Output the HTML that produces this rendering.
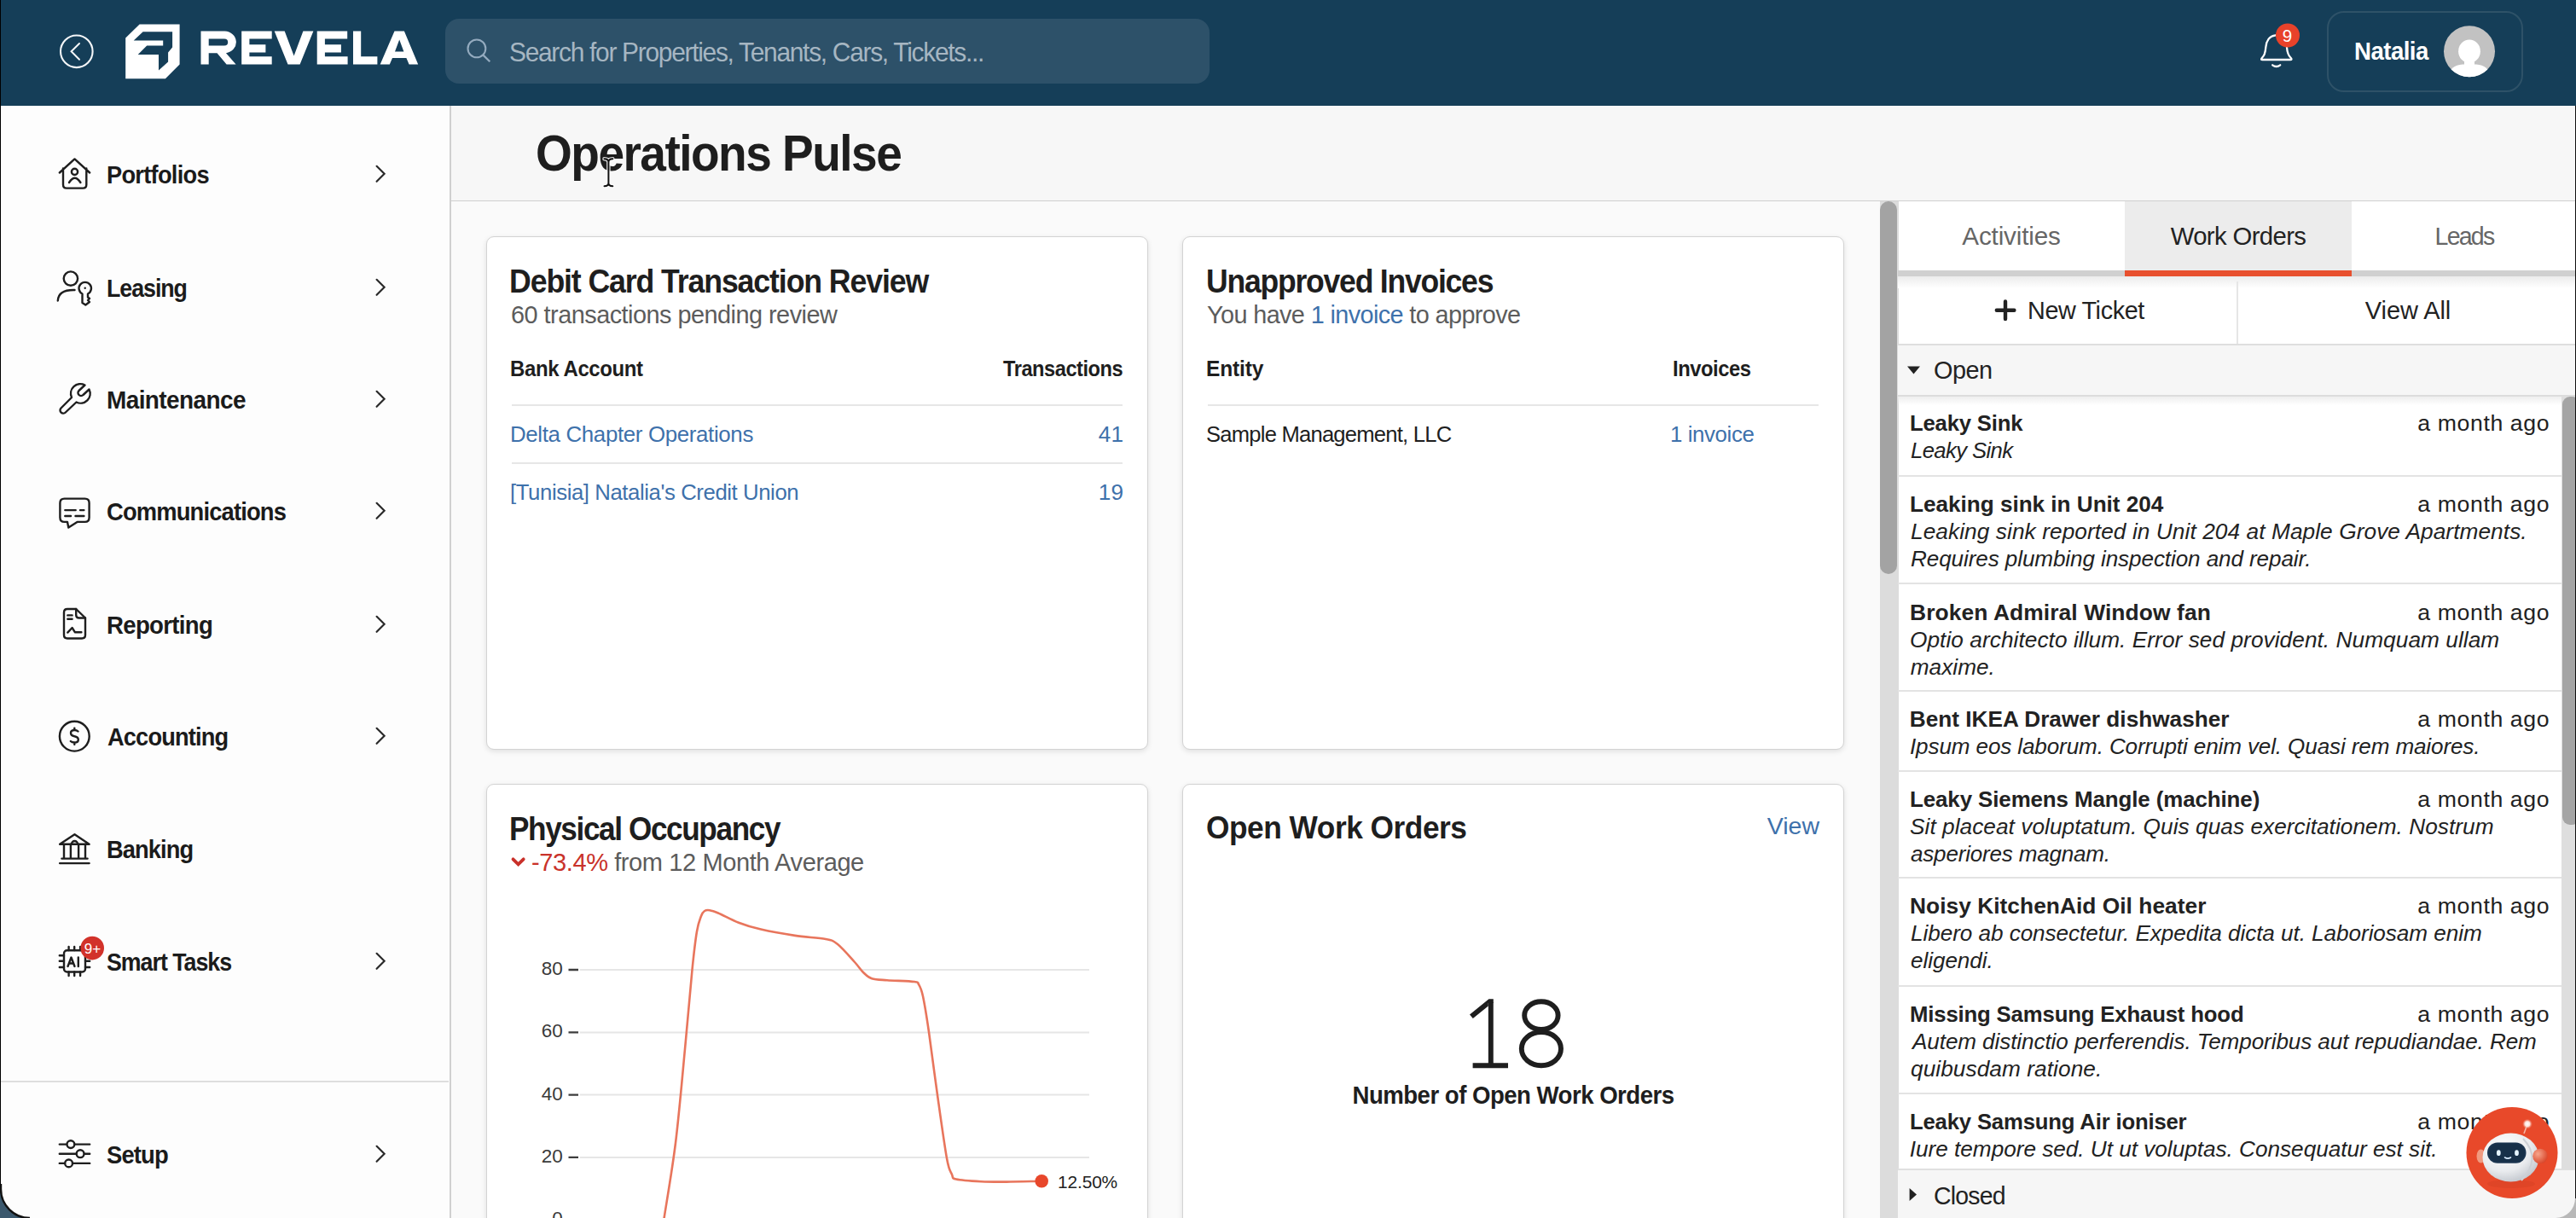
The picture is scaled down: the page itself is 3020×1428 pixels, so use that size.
<!DOCTYPE html>
<html><head><meta charset="utf-8"><title>Operations Pulse</title>
<style>
html,body{margin:0;padding:0;}
body{width:3020px;height:1428px;overflow:hidden;position:relative;background:#fff;font-family:"Liberation Sans",sans-serif;}
.a{position:absolute;}
.t{position:absolute;white-space:nowrap;line-height:1;}
svg.a{overflow:visible;}
</style></head><body>
<div class="a" style="left:528px;top:124px;width:2492px;height:111px;background:#f7f7f7;"></div>
<div class="a" style="left:528px;top:235px;width:2492px;height:1193px;background:#fafafa;"></div>
<div class="a" style="left:1px;top:124px;width:527px;height:1304px;background:#fdfdfd;"></div>
<div class="a" style="left:527px;top:124px;width:1.7px;height:1304px;background:#d0d0d0;"></div>
<div class="a" style="left:1px;top:1267px;width:525px;height:2px;background:#dedede;"></div>
<div class="a" style="left:0px;top:0px;width:3020px;height:124px;background:#153e58;"></div>
<div class="a" style="left:0px;top:0px;width:1px;height:1428px;background:#000;"></div>
<div class="a" style="left:528px;top:234.5px;width:2492px;height:1.8px;background:#cfcfcf;"></div>
<svg class="a" style="left:0;top:0" width="600" height="124" viewBox="0 0 600 124">
<circle cx="89.8" cy="60.3" r="18.8" fill="none" stroke="#f4f6f8" stroke-width="2.1"/>
<path d="M93 51 L83.6 60.3 L93 69.7" fill="none" stroke="#f4f6f8" stroke-width="2" stroke-linecap="round" stroke-linejoin="miter"/>
<path fill="#fff" fill-rule="evenodd" d="M163.6 28.5 L210.6 28.5 L210.6 75.5 L193.9 92.25 L147.2 92.25 L147.2 44.6 Z
 M167.6 37.2 L202.1 37.2 L202.1 55.5 L197.1 61.4 L197.1 72.5 L186 82.4 L186 64.1 L161.7 64.1 L172.2 53.5 L191.2 53.5 L191.2 47.6 L156.7 47.6 Z"/>
<g fill="#fff" fill-rule="evenodd">
<path d="M235.5 36.4 H263.5 A14.2 13 0 0 1 265 62.2 L276.6 75.5 H265.6 L254.5 62.2 H244.7 V75.5 H235.5 Z M244.7 45.4 V53.4 H263 A4.2 4 0 0 0 263 45.4 Z"/>
<path d="M283.2 36.4 H318.7 V45.5 H292.4 V52.2 H311.4 V61.4 H292.4 V66.3 H318.7 V75.5 H283.2 Z"/>
<path d="M321.7 36.4 H333.7 L344.6 65.5 L355.4 36.4 H367.4 L351.6 75.5 H337.5 Z"/>
<path d="M371.7 36.4 H407.2 V45.5 H380.9 V52.2 H399.9 V61.4 H380.9 V66.3 H407.6 V75.5 H371.7 Z"/>
<path d="M414 36.4 H423.2 V66.3 H442.4 V75.5 H414 Z"/>
<path d="M462.5 36.4 H473.9 L490.2 75.5 H479.6 L476.4 67.9 H460 L456.8 75.5 H445.7 Z M468.2 46.5 L473.4 60.5 H463 Z"/>
</g>
</svg>
<div class="a" style="left:522px;top:22px;width:896px;height:76px;background:#2d5169;border-radius:16px;"></div>
<svg class="a" style="left:540px;top:40px" width="40" height="40" viewBox="540 40 40 40">
<circle cx="558.9" cy="56.9" r="10.4" fill="none" stroke="#94abbf" stroke-width="2.1"/>
<path d="M566.5 64.6 L574.3 72.3" stroke="#94abbf" stroke-width="2.3" stroke-linecap="butt"/>
</svg>
<div class="t" style="transform:scaleX(0.9562);transform-origin:0 0;top:45.5px;font-size:31.3px;font-weight:400;color:#a6b6c2;letter-spacing:-1.355px;left:597.09px;">Search for Properties, Tenants, Cars, Tickets...</div>
<svg class="a" style="left:2640px;top:20px" width="70" height="70" viewBox="2640 20 70 70">
<path d="M2667.8 41.3 C2660.5 42 2656.8 48 2656.3 55.5 C2655.8 62.5 2654.5 65.5 2651.8 68 Q2650 70 2652.5 70 H2685 Q2687.6 70 2685.8 68 C2683 65.5 2681.5 62.5 2681 55.5" fill="none" stroke="#fff" stroke-width="2.3" stroke-linejoin="round" stroke-linecap="round"/>
<path d="M2664.2 76.3 Q2668.7 79.8 2673.2 76.3" fill="none" stroke="#fff" stroke-width="2.3" stroke-linecap="round"/>
<circle cx="2682" cy="41.5" r="14" fill="#e8422a"/>
</svg>
<div class="t" style="top:31.9px;font-size:20.5px;font-weight:400;color:#fff;left:1681.50px;width:2000px;text-align:center;">9</div>
<div class="a" style="left:2728px;top:13px;width:230px;height:95px;border:2px solid #2e5268;border-radius:20px;box-sizing:border-box;"></div>
<div class="t" style="transform:scaleX(0.9480);transform-origin:0 0;top:46.4px;font-size:29.1px;font-weight:700;color:#fff;letter-spacing:-0.548px;left:2760.10px;">Natalia</div>
<svg class="a" style="left:2860px;top:25px" width="70" height="70" viewBox="2860 25 70 70">
<defs><clipPath id="av"><circle cx="2895" cy="60.3" r="30"/></clipPath></defs>
<circle cx="2895" cy="60.3" r="30" fill="#c2c2c2"/>
<g clip-path="url(#av)" fill="#fff">
<ellipse cx="2895" cy="60.2" rx="12.9" ry="13.6"/>
<rect x="2889" y="68" width="12" height="10"/>
<path d="M2871 100 V89 Q2872 76.8 2887 75.5 H2903 Q2918 76.8 2919 89 V100 Z"/>
</g>
</svg>
<div class="t" style="transform:scaleX(0.9229);transform-origin:0 0;top:190.2px;font-size:29.5px;font-weight:700;color:#1b1b1b;letter-spacing:-0.781px;left:125.12px;">Portfolios</div>
<svg class="a" style="left:430px;top:189px" width="30" height="30" viewBox="0 0 30 30"><path d="M11.6 5.8 L20.6 14.8 L11.6 23.8" fill="none" stroke="#2a2a2a" stroke-width="2.2" stroke-linecap="round" stroke-linejoin="miter"/></svg>
<div class="t" style="transform:scaleX(0.9071);transform-origin:0 0;top:322.7px;font-size:29.5px;font-weight:700;color:#1b1b1b;letter-spacing:-1.133px;left:125.14px;">Leasing</div>
<svg class="a" style="left:430px;top:321.5px" width="30" height="30" viewBox="0 0 30 30"><path d="M11.6 5.8 L20.6 14.8 L11.6 23.8" fill="none" stroke="#2a2a2a" stroke-width="2.2" stroke-linecap="round" stroke-linejoin="miter"/></svg>
<div class="t" style="transform:scaleX(0.9480);transform-origin:0 0;top:454.2px;font-size:29.5px;font-weight:700;color:#1b1b1b;letter-spacing:-0.616px;left:125.08px;">Maintenance</div>
<svg class="a" style="left:430px;top:453px" width="30" height="30" viewBox="0 0 30 30"><path d="M11.6 5.8 L20.6 14.8 L11.6 23.8" fill="none" stroke="#2a2a2a" stroke-width="2.2" stroke-linecap="round" stroke-linejoin="miter"/></svg>
<div class="t" style="transform:scaleX(0.9268);transform-origin:0 0;top:585.2px;font-size:29.5px;font-weight:700;color:#1b1b1b;letter-spacing:-0.901px;left:125.11px;">Communications</div>
<svg class="a" style="left:430px;top:584px" width="30" height="30" viewBox="0 0 30 30"><path d="M11.6 5.8 L20.6 14.8 L11.6 23.8" fill="none" stroke="#2a2a2a" stroke-width="2.2" stroke-linecap="round" stroke-linejoin="miter"/></svg>
<div class="t" style="transform:scaleX(0.9360);transform-origin:0 0;top:717.8px;font-size:29.5px;font-weight:700;color:#1b1b1b;letter-spacing:-0.734px;left:125.10px;">Reporting</div>
<svg class="a" style="left:430px;top:716.6px" width="30" height="30" viewBox="0 0 30 30"><path d="M11.6 5.8 L20.6 14.8 L11.6 23.8" fill="none" stroke="#2a2a2a" stroke-width="2.2" stroke-linecap="round" stroke-linejoin="miter"/></svg>
<div class="t" style="transform:scaleX(0.9230);transform-origin:0 0;top:849.2px;font-size:29.5px;font-weight:700;color:#1b1b1b;letter-spacing:-0.925px;left:126.04px;">Accounting</div>
<svg class="a" style="left:430px;top:848px" width="30" height="30" viewBox="0 0 30 30"><path d="M11.6 5.8 L20.6 14.8 L11.6 23.8" fill="none" stroke="#2a2a2a" stroke-width="2.2" stroke-linecap="round" stroke-linejoin="miter"/></svg>
<div class="t" style="transform:scaleX(0.9237);transform-origin:0 0;top:981.2px;font-size:29.5px;font-weight:700;color:#1b1b1b;letter-spacing:-0.971px;left:125.11px;">Banking</div>
<div class="t" style="transform:scaleX(0.9058);transform-origin:0 0;top:1113.2px;font-size:29.5px;font-weight:700;color:#1b1b1b;letter-spacing:-1.092px;left:125.14px;">Smart Tasks</div>
<svg class="a" style="left:430px;top:1112px" width="30" height="30" viewBox="0 0 30 30"><path d="M11.6 5.8 L20.6 14.8 L11.6 23.8" fill="none" stroke="#2a2a2a" stroke-width="2.2" stroke-linecap="round" stroke-linejoin="miter"/></svg>
<div class="t" style="transform:scaleX(0.9300);transform-origin:0 0;top:1339.2px;font-size:29.5px;font-weight:700;color:#1b1b1b;letter-spacing:-0.933px;left:125.11px;">Setup</div>
<svg class="a" style="left:430px;top:1338px" width="30" height="30" viewBox="0 0 30 30"><path d="M11.6 5.8 L20.6 14.8 L11.6 23.8" fill="none" stroke="#2a2a2a" stroke-width="2.2" stroke-linecap="round" stroke-linejoin="miter"/></svg>
<svg class="a" style="left:0;top:0" width="140" height="1428" viewBox="0 0 140 1428">
<g fill="none" stroke="#1e1e1e" stroke-width="2.4" stroke-linecap="round" stroke-linejoin="round">
<!-- portfolios -->
<path d="M69.8 202.5 L87.5 186.4 L105.2 202.5 M74 197.5 V216.5 Q74 220.6 78 220.6 H97.3 Q101.3 220.6 101.3 216.5 V197.5"/>
<circle cx="87.5" cy="201.4" r="3.6"/>
<path d="M81 214 Q87.7 203.5 94.4 214"/>
<!-- leasing -->
<circle cx="82.9" cy="326.6" r="8.2"/>
<path d="M67.8 352.5 Q68.5 339.5 87.5 340"/>
<path d="M96.5 344.5 A7.2 7.2 0 1 1 103 344.5 V348.5 L105 350 L103 352 L105 354 L100.3 357.5 L96.5 355 Z"/>
<!-- maintenance -->
<path d="M84 466 L71.5 478.5 A3.6 3.6 0 0 0 76.8 483.5 L89.5 471.5 A11.2 11.2 0 0 0 104.5 456.5 L97.5 463 A3.5 3.5 0 0 1 92.5 458 L99.5 451.5 A11.2 11.2 0 0 0 84 466 Z"/>
<!-- communications -->
<path d="M75.5 584.6 H99.5 Q104.6 584.6 104.6 589.7 V606.8 Q104.6 611.9 99.5 611.9 H90.5 L80.3 618.5 L79 611.9 H75.5 Q70.4 611.9 70.4 606.8 V589.7 Q70.4 584.6 75.5 584.6 Z"/>
<path d="M76.3 598.1 H88.7 M94 598.1 H98.4 M76.3 605 H83 M88.5 605 H98.4"/>
<!-- reporting -->
<path d="M89.2 714 H79 Q75 714 75 718 V744.5 Q75 748.5 79 748.5 H96 Q100 748.5 100 744.5 V724.5 Z"/>
<path d="M89.2 714 V720.9 Q89.2 724.5 92.8 724.5 H100"/>
<path d="M79.3 721.4 H84.6 M79.3 725.8 H84.6"/>
<path d="M79.3 741.6 L84.6 736 L87.8 741.2 H95.4"/>
<!-- accounting -->
<circle cx="87.3" cy="863.2" r="17.4"/>
<path d="M91.5 857.5 Q90 856 87.3 856 Q83 856 83 859.3 Q83 862.5 87.3 863.2 Q91.8 864 91.8 867.2 Q91.8 870.5 87.3 870.5 Q84.3 870.5 82.8 869 M87.3 853.6 V856 M87.3 870.5 V872.8"/>
<!-- banking -->
<path d="M70.1 989.8 L87.5 978.3 L104.6 989.8 Z"/>
<path d="M75 990 V1006.6 M82.9 990 V1006.6 M92.1 990 V1006.6 M100 990 V1006.6 M72.4 1006.6 H102.6 M70.1 1012.1 H104.6"/>
<path d="M84 989.5 A3.5 3.5 0 0 1 91 989.5"/>
<!-- smart tasks -->
<rect x="75" y="1114.3" width="25" height="25.2" rx="3.5"/>
<path d="M80.6 1110 V1114 M87.2 1110 V1114 M94.1 1110 V1114 M80.6 1139.5 V1144.1 M87.2 1139.5 V1144.1 M94.1 1139.5 V1144.1 M69.8 1120.2 H75 M69.8 1126.7 H75 M69.8 1134 H75 M100 1120.2 H105.2 M100 1126.7 H105.2 M100 1134 H105.2"/>
<path d="M79.5 1133 L83.5 1122.5 L87.5 1133 M81 1129.5 H86 M91.8 1122.5 V1133"/>
<!-- setup -->
<path d="M69.8 1341.6 H105.2 M69.8 1352.7 H105.2 M69.8 1363.9 H105.2"/>
</g>
<g fill="#fdfdfd" stroke="#1e1e1e" stroke-width="2.4">
<circle cx="82.9" cy="1341.6" r="4.4"/>
<circle cx="94.1" cy="1352.7" r="4.4"/>
<circle cx="80.6" cy="1363.9" r="4.4"/>
</g>
<circle cx="99.7" cy="337.8" r="1.2" fill="#1e1e1e"/>
<circle cx="108.2" cy="1111.6" r="13.8" fill="#d2322a"/>
</svg>
<div class="t" style="top:1104.1px;font-size:17px;font-weight:400;color:#fff;left:-891.60px;width:2000px;text-align:center;">9+</div>
<div class="t" style="transform:scaleX(0.9240);transform-origin:0 0;top:149.5px;font-size:59.6px;font-weight:700;color:#1e1e1e;letter-spacing:-1.664px;left:628.15px;">Operations Pulse</div>
<div class="a" style="left:570px;top:277px;width:776px;height:601.5px;background:#fff;border:1.6px solid #d3d3d3;border-radius:9px;box-sizing:border-box;box-shadow:0 2px 6px rgba(0,0,0,0.11);"></div>
<div class="a" style="left:1386px;top:277px;width:776px;height:601.5px;background:#fff;border:1.6px solid #d3d3d3;border-radius:9px;box-sizing:border-box;box-shadow:0 2px 6px rgba(0,0,0,0.11);"></div>
<div class="a" style="left:570px;top:919px;width:776px;height:560px;background:#fff;border:1.6px solid #d3d3d3;border-radius:9px;box-sizing:border-box;box-shadow:0 2px 6px rgba(0,0,0,0.11);"></div>
<div class="a" style="left:1386px;top:919px;width:776px;height:560px;background:#fff;border:1.6px solid #d3d3d3;border-radius:9px;box-sizing:border-box;box-shadow:0 2px 6px rgba(0,0,0,0.11);"></div>
<div class="t" style="transform:scaleX(0.9108);transform-origin:0 0;top:310.4px;font-size:39.2px;font-weight:700;color:#1e1e1e;letter-spacing:-1.234px;left:597.27px;">Debit Card Transaction Review</div>
<div class="t" style="transform:scaleX(0.9831);transform-origin:0 0;top:353.8px;font-size:29.4px;font-weight:400;color:#5c5c5c;letter-spacing:-0.543px;left:599.02px;">60 transactions pending review</div>
<div class="t" style="transform:scaleX(0.9594);transform-origin:0 0;top:419.6px;font-size:25.0px;font-weight:700;color:#1e1e1e;letter-spacing:-0.408px;left:598.08px;">Bank Account</div>
<div class="t" style="transform:scaleX(0.9461);transform-origin:100% 0;top:419.6px;font-size:25.0px;font-weight:700;color:#1e1e1e;letter-spacing:-0.505px;right:1703.53px;">Transactions</div>
<div class="a" style="left:600px;top:474px;width:716px;height:2px;background:#e6e6e6;"></div>
<div class="t" style="transform:scaleX(0.9880);transform-origin:0 0;top:496.2px;font-size:26.2px;font-weight:400;color:#3e71ab;letter-spacing:-0.355px;left:598.02px;">Delta Chapter Operations</div>
<div class="t" style="top:496.2px;font-size:26.2px;font-weight:400;color:#3e71ab;right:1703.00px;">41</div>
<div class="a" style="left:600px;top:542px;width:716px;height:2px;background:#e6e6e6;"></div>
<div class="t" style="transform:scaleX(0.9836);transform-origin:0 0;top:563.8px;font-size:26.2px;font-weight:400;color:#3e71ab;letter-spacing:-0.433px;left:598.03px;">[Tunisia] Natalia's Credit Union</div>
<div class="t" style="top:563.8px;font-size:26.2px;font-weight:400;color:#3e71ab;right:1703.00px;">19</div>
<div class="t" style="transform:scaleX(0.9077);transform-origin:0 0;top:310.4px;font-size:39.2px;font-weight:700;color:#1e1e1e;letter-spacing:-1.366px;left:1414.18px;">Unapproved Invoices</div>
<div class="t" style="transform:scaleX(0.9807);transform-origin:0 0;top:353.8px;font-size:29.4px;font-weight:400;color:#5c5c5c;letter-spacing:-0.621px;left:1415.02px;">You have <span style="color:#3e71ab">1 invoice</span> to approve</div>
<div class="t" style="transform:scaleX(0.9820);transform-origin:0 0;top:419.6px;font-size:25.0px;font-weight:700;color:#1e1e1e;letter-spacing:-0.161px;left:1414.04px;">Entity</div>
<div class="t" style="transform:scaleX(0.9502);transform-origin:0 0;top:419.6px;font-size:25.0px;font-weight:700;color:#1e1e1e;letter-spacing:-0.469px;left:1961.07px;">Invoices</div>
<div class="a" style="left:1416px;top:474px;width:716px;height:2px;background:#e6e6e6;"></div>
<div class="t" style="transform:scaleX(0.9767);transform-origin:0 0;top:496.2px;font-size:26.2px;font-weight:400;color:#1e1e1e;letter-spacing:-0.786px;left:1414.05px;">Sample Management, LLC</div>
<div class="t" style="transform:scaleX(0.9864);transform-origin:0 0;top:496.2px;font-size:26.2px;font-weight:400;color:#3e71ab;letter-spacing:-0.396px;left:1958.02px;">1 invoice</div>
<div class="t" style="transform:scaleX(0.8974);transform-origin:0 0;top:952.1px;font-size:39.2px;font-weight:700;color:#1e1e1e;letter-spacing:-1.548px;left:597.31px;">Physical Occupancy</div>
<svg class="a" style="left:595px;top:995px" width="26" height="26" viewBox="595 995 26 26"><path d="M601.5 1007.3 L607.6 1013.4 L613.7 1007.3" fill="none" stroke="#c9302a" stroke-width="3.8" stroke-linecap="round" stroke-linejoin="miter"/></svg>
<div class="t" style="transform:scaleX(0.9880);transform-origin:0 0;top:995.9px;font-size:29.4px;font-weight:400;color:#5c5c5c;letter-spacing:-0.417px;left:623.01px;"><span style="color:#c9322a">-73.4%</span> from 12 Month Average</div>
<svg class="a" style="left:570px;top:1040px" width="776" height="388" viewBox="570 1040 776 388">
<g stroke="#e6e6e6" stroke-width="2">
<path d="M680 1137 H1277 M680 1210.4 H1277 M680 1283.6 H1277 M680 1356.9 H1277"/>
</g>
<g stroke="#3d3d3d" stroke-width="2.3">
<path d="M666.5 1137 H678 M666.5 1210.4 H678 M666.5 1283.6 H678 M666.5 1356.9 H678 M666.5 1430 H678"/>
</g>
<path d="M776.2 1443 C776.6 1440.5 776.0 1445.2 778.6 1428 C781.2 1410.8 787.9 1373.0 792 1340 C796.1 1307.0 799.8 1263.8 803 1230 C806.2 1196.2 809.2 1160.0 811.5 1137 C813.8 1114.0 815.2 1102.5 817 1092 C818.8 1081.5 820.5 1078.0 822 1074 C823.5 1070.0 824.3 1069.1 826 1068 C827.7 1066.9 829.3 1066.8 832 1067.2 C834.7 1067.6 836.3 1068.1 842 1070.5 C847.7 1072.9 857.7 1078.5 866 1081.7 C874.3 1084.9 881.0 1087.1 892 1089.6 C903.0 1092.1 919.3 1095.0 932 1096.9 C944.7 1098.8 959.7 1099.3 968 1101 C976.3 1102.7 976.3 1102.5 982 1107 C987.7 1111.5 997.0 1122.5 1002 1128 C1007.0 1133.5 1008.7 1136.8 1012 1140 C1015.3 1143.2 1017.3 1145.7 1022 1147.2 C1026.7 1148.7 1031.7 1148.6 1040 1149.2 C1048.3 1149.8 1065.8 1150.2 1072 1151 C1078.2 1151.8 1075.3 1151.2 1077 1154 C1078.7 1156.8 1080.0 1158.7 1082 1168 C1084.0 1177.3 1086.2 1190.7 1089 1210 C1091.8 1229.3 1095.5 1259.1 1099 1283.8 C1102.5 1308.5 1107.2 1342.5 1110 1358 C1112.8 1373.5 1114.2 1372.9 1116 1377 C1117.8 1381.1 1115.3 1381.1 1121 1382.5 C1126.7 1383.9 1140.2 1384.7 1150 1385.2 C1159.8 1385.7 1168.1 1385.7 1180 1385.6 C1191.9 1385.5 1214.3 1384.9 1221.2 1384.8" fill="none" stroke="#e8755c" stroke-width="2.6" stroke-linejoin="round"/>
<circle cx="1221.2" cy="1384.8" r="7.8" fill="#e8472b"/>
</svg>
<div class="t" style="top:1124.9px;font-size:22.5px;font-weight:400;color:#3a3a3a;right:2360.19px;">80</div>
<div class="t" style="top:1198.3px;font-size:22.5px;font-weight:400;color:#3a3a3a;right:2360.19px;">60</div>
<div class="t" style="top:1271.5px;font-size:22.5px;font-weight:400;color:#3a3a3a;right:2360.19px;">40</div>
<div class="t" style="top:1344.8px;font-size:22.5px;font-weight:400;color:#3a3a3a;right:2360.19px;">20</div>
<div class="t" style="top:1417.9px;font-size:22.5px;font-weight:400;color:#3a3a3a;right:2360.19px;">0</div>
<div class="t" style="transform:scaleX(0.9956);transform-origin:0 0;top:1374.7px;font-size:21px;font-weight:400;color:#222;letter-spacing:-0.14px;left:1240.01px;">12.50%</div>
<div class="t" style="transform:scaleX(0.9651);transform-origin:0 0;top:953.2px;font-size:36.6px;font-weight:700;color:#1e1e1e;letter-spacing:-0.502px;left:1414.05px;">Open Work Orders</div>
<div class="t" style="top:954.4px;font-size:28.5px;font-weight:400;color:#3e71ab;right:887.00px;">View</div>
<svg class="a" style="left:1710px;top:1160px" width="140" height="100" viewBox="1710 1160 140 100">
<g fill="none" stroke="#1e1e1e" stroke-width="5.9">
<path d="M1747.8 1175 V1249.5 M1726.6 1249.3 H1768"/>
<ellipse cx="1806.9" cy="1190.6" rx="19.7" ry="16.4"/>
<ellipse cx="1806.9" cy="1229.6" rx="23.1" ry="19.6"/>
</g>
<path d="M1750.8 1171.2 H1745.5 L1723 1189.5 L1726.8 1194 L1744.8 1179.5 V1176 H1750.8 Z" fill="#1e1e1e"/>
</svg>
<div class="t" style="transform:scaleX(0.9493);transform-origin:50% 0;top:1270.4px;font-size:29.1px;font-weight:700;color:#1e1e1e;letter-spacing:-0.558px;left:773.64px;width:2000px;text-align:center;">Number of Open Work Orders</div>
<div class="a" style="left:2204px;top:236px;width:21px;height:1192px;background:#dcdcdc;"></div>
<div class="a" style="left:2204px;top:236px;width:20px;height:437px;background:#a3a3a3;border-radius:10px;"></div>
<div class="a" style="left:2225px;top:236px;width:795px;height:1192px;background:#fff;border-left:1.5px solid #dcdcdc;box-sizing:border-box;"></div>
<div class="a" style="left:2491px;top:236px;width:266px;height:81px;background:#ececec;"></div>
<div class="a" style="left:2225px;top:316.5px;width:795px;height:8px;background:#d0d0d0;"></div>
<div class="a" style="left:2491px;top:316.5px;width:266px;height:8px;background:#e8502e;"></div>
<div class="a" style="left:2225px;top:324px;width:795px;height:14px;background:linear-gradient(#ececec,#fff);"></div>
<div class="t" style="transform:scaleX(0.9948);transform-origin:50% 0;top:261.8px;font-size:29.8px;font-weight:400;color:#666;letter-spacing:-0.156px;left:1357.92px;width:2000px;text-align:center;">Activities</div>
<div class="t" style="transform:scaleX(0.9835);transform-origin:50% 0;top:261.8px;font-size:29.8px;font-weight:400;color:#222;letter-spacing:-0.635px;left:1624.18px;width:2000px;text-align:center;">Work Orders</div>
<div class="t" style="transform:scaleX(0.9576);transform-origin:50% 0;top:261.8px;font-size:29.8px;font-weight:400;color:#666;letter-spacing:-1.877px;left:1888.52px;width:2000px;text-align:center;">Leads</div>
<div class="a" style="left:2622px;top:330px;width:2px;height:74px;background:#e6e6e6;"></div>
<div class="a" style="left:2225px;top:403px;width:795px;height:2px;background:#dedede;"></div>
<svg class="a" style="left:2335px;top:345px" width="32" height="32" viewBox="2335 345 32 32"><path d="M2351 353.5 V374 M2340.8 363.8 H2361.4" stroke="#222" stroke-width="4.4" stroke-linecap="round"/></svg>
<div class="t" style="transform:scaleX(0.9891);transform-origin:0 0;top:350.4px;font-size:29.1px;font-weight:400;color:#222;letter-spacing:-0.391px;left:2377.02px;">New Ticket</div>
<div class="t" style="transform:scaleX(0.9970);transform-origin:50% 0;top:350.4px;font-size:29.1px;font-weight:400;color:#222;letter-spacing:-0.1px;left:1823.45px;width:2000px;text-align:center;">View All</div>
<div class="a" style="left:2225px;top:405px;width:795px;height:58px;background:#f6f6f6;"></div>
<div class="a" style="left:2225px;top:462.5px;width:795px;height:2px;background:#dcdcdc;"></div>
<div class="a" style="left:2225px;top:464.5px;width:778px;height:10px;background:linear-gradient(#eeeeee,rgba(255,255,255,0));"></div>
<svg class="a" style="left:2230px;top:425px" width="30" height="30" viewBox="2230 425 30 30"><path d="M2236 429.5 H2251 L2243.5 438.5 Z" fill="#222"/></svg>
<div class="t" style="transform:scaleX(0.9911);transform-origin:0 0;top:420.4px;font-size:29.1px;font-weight:400;color:#222;letter-spacing:-0.469px;left:2267.01px;">Open</div>
<div class="t" style="transform:scaleX(0.9808);transform-origin:0 0;top:483.3px;font-size:26.2px;font-weight:700;color:#222;letter-spacing:-0.193px;left:2238.82px;">Leaky Sink</div>
<div class="t" style="transform:scaleX(1.0177);transform-origin:100% 0;top:483.3px;font-size:26.2px;font-weight:400;color:#222;letter-spacing:0.597px;right:30.37px;">a month ago</div>
<div class="t" style="transform:scaleX(0.9808);transform-origin:0 0;top:515.3px;font-size:26.2px;font-weight:400;color:#222;letter-spacing:-0.628px;font-style:italic;left:2239.80px;">Leaky Sink</div>
<div class="a" style="left:2225px;top:556.7px;width:778px;height:2px;background:#e3e3e3;"></div>
<div class="t" style="transform:scaleX(0.9980);transform-origin:0 0;top:578.0px;font-size:26.2px;font-weight:700;color:#222;letter-spacing:-0.017px;left:2238.79px;">Leaking sink in Unit 204</div>
<div class="t" style="transform:scaleX(1.0177);transform-origin:100% 0;top:578.0px;font-size:26.2px;font-weight:400;color:#222;letter-spacing:0.597px;right:30.37px;">a month ago</div>
<div class="t" style="transform:scaleX(1.0025);transform-origin:0 0;top:610.0px;font-size:26.2px;font-weight:400;color:#222;letter-spacing:0.071px;font-style:italic;left:2239.79px;">Leaking sink reported in Unit 204 at Maple Grove Apartments.</div>
<div class="t" style="transform:scaleX(0.9964);transform-origin:0 0;top:642.0px;font-size:26.2px;font-weight:400;color:#222;letter-spacing:-0.101px;font-style:italic;left:2239.79px;">Requires plumbing inspection and repair.</div>
<div class="a" style="left:2225px;top:683.3px;width:778px;height:2px;background:#e3e3e3;"></div>
<div class="t" style="transform:scaleX(1.0083);transform-origin:0 0;top:704.6px;font-size:26.2px;font-weight:700;color:#222;letter-spacing:0.08px;left:2238.78px;">Broken Admiral Window fan</div>
<div class="t" style="transform:scaleX(1.0177);transform-origin:100% 0;top:704.6px;font-size:26.2px;font-weight:400;color:#222;letter-spacing:0.597px;right:30.37px;">a month ago</div>
<div class="t" style="transform:scaleX(1.0018);transform-origin:0 0;top:736.6px;font-size:26.2px;font-weight:400;color:#222;letter-spacing:0.052px;font-style:italic;left:2238.79px;">Optio architecto illum. Error sed provident. Numquam ullam</div>
<div class="t" style="top:768.6px;font-size:26.2px;font-weight:400;color:#222;letter-spacing:0.023px;font-style:italic;left:2239.79px;">maxime.</div>
<div class="a" style="left:2225px;top:809px;width:778px;height:2px;background:#e3e3e3;"></div>
<div class="t" style="top:830.3px;font-size:26.2px;font-weight:700;color:#222;letter-spacing:0.009px;left:2238.79px;">Bent IKEA Drawer dishwasher</div>
<div class="t" style="transform:scaleX(1.0177);transform-origin:100% 0;top:830.3px;font-size:26.2px;font-weight:400;color:#222;letter-spacing:0.597px;right:30.37px;">a month ago</div>
<div class="t" style="transform:scaleX(0.9957);transform-origin:0 0;top:862.3px;font-size:26.2px;font-weight:400;color:#222;letter-spacing:-0.124px;font-style:italic;left:2238.80px;">Ipsum eos laborum. Corrupti enim vel. Quasi rem maiores.</div>
<div class="a" style="left:2225px;top:902.7px;width:778px;height:2px;background:#e3e3e3;"></div>
<div class="t" style="transform:scaleX(0.9893);transform-origin:0 0;top:924.0px;font-size:26.2px;font-weight:700;color:#222;letter-spacing:-0.103px;left:2238.81px;">Leaky Siemens Mangle (machine)</div>
<div class="t" style="transform:scaleX(1.0177);transform-origin:100% 0;top:924.0px;font-size:26.2px;font-weight:400;color:#222;letter-spacing:0.597px;right:30.37px;">a month ago</div>
<div class="t" style="transform:scaleX(1.0015);transform-origin:0 0;top:956.0px;font-size:26.2px;font-weight:400;color:#222;letter-spacing:0.042px;font-style:italic;left:2238.79px;">Sit placeat voluptatum. Quis quas exercitationem. Nostrum</div>
<div class="t" style="transform:scaleX(0.9941);transform-origin:0 0;top:988.0px;font-size:26.2px;font-weight:400;color:#222;letter-spacing:-0.19px;font-style:italic;left:2239.79px;">asperiores magnam.</div>
<div class="a" style="left:2225px;top:1028px;width:778px;height:2px;background:#e3e3e3;"></div>
<div class="t" style="transform:scaleX(1.0045);transform-origin:0 0;top:1049.3px;font-size:26.2px;font-weight:700;color:#222;letter-spacing:0.04px;left:2238.78px;">Noisy KitchenAid Oil heater</div>
<div class="t" style="transform:scaleX(1.0177);transform-origin:100% 0;top:1049.3px;font-size:26.2px;font-weight:400;color:#222;letter-spacing:0.597px;right:30.37px;">a month ago</div>
<div class="t" style="transform:scaleX(0.9979);transform-origin:0 0;top:1081.3px;font-size:26.2px;font-weight:400;color:#222;letter-spacing:-0.06px;font-style:italic;left:2239.79px;">Libero ab consectetur. Expedita dicta ut. Laboriosam enim</div>
<div class="t" style="transform:scaleX(0.9974);transform-origin:0 0;top:1113.3px;font-size:26.2px;font-weight:400;color:#222;letter-spacing:-0.07px;font-style:italic;left:2239.79px;">eligendi.</div>
<div class="a" style="left:2225px;top:1154.5px;width:778px;height:2px;background:#e3e3e3;"></div>
<div class="t" style="transform:scaleX(0.9828);transform-origin:0 0;top:1175.8px;font-size:26.2px;font-weight:700;color:#222;letter-spacing:-0.17px;left:2238.82px;">Missing Samsung Exhaust hood</div>
<div class="t" style="transform:scaleX(1.0177);transform-origin:100% 0;top:1175.8px;font-size:26.2px;font-weight:400;color:#222;letter-spacing:0.597px;right:30.37px;">a month ago</div>
<div class="t" style="transform:scaleX(0.9967);transform-origin:0 0;top:1207.8px;font-size:26.2px;font-weight:400;color:#222;letter-spacing:-0.095px;font-style:italic;left:2241.79px;">Autem distinctio perferendis. Temporibus aut repudiandae. Rem</div>
<div class="t" style="transform:scaleX(1.0020);transform-origin:0 0;top:1239.8px;font-size:26.2px;font-weight:400;color:#222;letter-spacing:0.062px;font-style:italic;left:2239.79px;">quibusdam ratione.</div>
<div class="a" style="left:2225px;top:1280.7px;width:778px;height:2px;background:#e3e3e3;"></div>
<div class="t" style="transform:scaleX(0.9808);transform-origin:0 0;top:1302.0px;font-size:26.2px;font-weight:700;color:#222;letter-spacing:-0.178px;left:2238.82px;">Leaky Samsung Air ioniser</div>
<div class="t" style="transform:scaleX(1.0177);transform-origin:100% 0;top:1302.0px;font-size:26.2px;font-weight:400;color:#222;letter-spacing:0.597px;right:30.37px;">a month ago</div>
<div class="t" style="top:1334.0px;font-size:26.2px;font-weight:400;color:#222;letter-spacing:-0.026px;font-style:italic;left:2238.79px;">Iure tempore sed. Ut ut voluptas. Consequatur est sit.</div>
<div class="a" style="left:2225px;top:1370px;width:778px;height:2px;background:#e3e3e3;"></div>
<div class="a" style="left:2225px;top:1371px;width:794px;height:57px;background:#f6f6f6;"></div>
<div class="a" style="left:2225px;top:1370px;width:794px;height:2px;background:#e0e0e0;"></div>
<svg class="a" style="left:2230px;top:1385px" width="30" height="30" viewBox="2230 1385 30 30"><path d="M2238.6 1393 L2247 1400.5 L2238.6 1408 Z" fill="#222"/></svg>
<div class="t" style="transform:scaleX(0.9790);transform-origin:0 0;top:1387.7px;font-size:29.1px;font-weight:400;color:#222;letter-spacing:-0.849px;left:2267.02px;">Closed</div>
<div class="a" style="left:3003px;top:464px;width:17px;height:907px;background:#dedede;"></div>
<div class="a" style="left:3003.5px;top:465px;width:20px;height:502px;background:#a5a5a5;border-radius:9px;"></div>
<div class="a" style="left:3019px;top:124px;width:1px;height:1304px;background:#111;"></div>
<svg class="a" style="left:2880px;top:1280px" width="140" height="148" viewBox="2880 1280 140 148">
<defs>
<radialGradient id="hg" cx="0.38" cy="0.3" r="0.8"><stop offset="0" stop-color="#ffffff"/><stop offset="0.6" stop-color="#e9ebee"/><stop offset="1" stop-color="#b9bec6"/></radialGradient>
<radialGradient id="eg" cx="0.35" cy="0.35" r="0.7"><stop offset="0" stop-color="#f7a58c"/><stop offset="1" stop-color="#d9462a"/></radialGradient>
<radialGradient id="ag" cx="0.5" cy="0.5" r="0.5"><stop offset="0" stop-color="#ffffff"/><stop offset="0.5" stop-color="#fde2da"/><stop offset="1" stop-color="#f07a60" stop-opacity="0"/></radialGradient>
</defs>
<circle cx="2945" cy="1351.5" r="53.5" fill="#e8492a"/>
<ellipse cx="2944" cy="1388" rx="28" ry="5" fill="#c93a20" opacity="0.3"/>
<path d="M2959 1329 L2963 1318" stroke="#f3b6a6" stroke-width="1.6"/>
<circle cx="2963" cy="1317.7" r="6" fill="url(#ag)"/>
<ellipse cx="2908.5" cy="1355.5" rx="5" ry="8" fill="#f09a80"/>
<ellipse cx="2943.5" cy="1357" rx="33" ry="28.5" fill="url(#hg)"/>
<path d="M2958 1335 Q2980 1358 2956 1384" fill="none" stroke="#cdd1d7" stroke-width="2"/>
<rect x="2916" y="1339.5" width="45.5" height="24.3" rx="12" fill="#1b3550"/>
<rect x="2918" y="1341" width="41.5" height="21" rx="10.5" fill="#173049"/>
<ellipse cx="2929.3" cy="1351.7" rx="2.4" ry="3.4" fill="#e4f4ff"/>
<ellipse cx="2950.5" cy="1351.7" rx="2.4" ry="3.4" fill="#e4f4ff"/>
<path d="M2936.5 1357 Q2940 1359.3 2943.5 1357" stroke="#d8ecff" stroke-width="1.6" fill="none" stroke-linecap="round"/>
<circle cx="2978" cy="1355.5" r="8.8" fill="url(#eg)"/>
</svg>
<svg class="a" style="left:700px;top:178px" width="30" height="46" viewBox="700 178 30 46">
<g fill="none" stroke-linecap="round">
<path d="M708.5 186.2 Q713.4 186.2 713.4 190 Q713.4 186.2 718.3 186.2 M713.4 190 V214.5 M708.5 218.3 Q713.4 218.3 713.4 214.5 Q713.4 218.3 718.3 218.3" stroke="#fff" stroke-width="4.5" opacity="0.85"/>
<path d="M708.5 186.2 Q713.4 186.2 713.4 190 Q713.4 186.2 718.3 186.2 M713.4 190 V214.5 M708.5 218.3 Q713.4 218.3 713.4 214.5 Q713.4 218.3 718.3 218.3" stroke="#111" stroke-width="2"/>
</g>
</svg>
<svg class="a" style="left:0;top:1388px" width="40" height="40" viewBox="0 1388 40 40"><path d="M0 1388 V1428 H40 L35 1428 A34 34 0 0 1 1 1394 V1388 Z" fill="#3b586d"/><path d="M1 1388 V1394 A34 34 0 0 0 35 1428" fill="none" stroke="#111" stroke-width="2.4"/></svg>
<svg class="a" style="left:2990px;top:1398px" width="30" height="30" viewBox="2990 1398 30 30"><path d="M3020 1405 V1428 H2996 A23 23 0 0 0 3019 1405 Z" fill="#b8b8b8"/></svg>
</body></html>
